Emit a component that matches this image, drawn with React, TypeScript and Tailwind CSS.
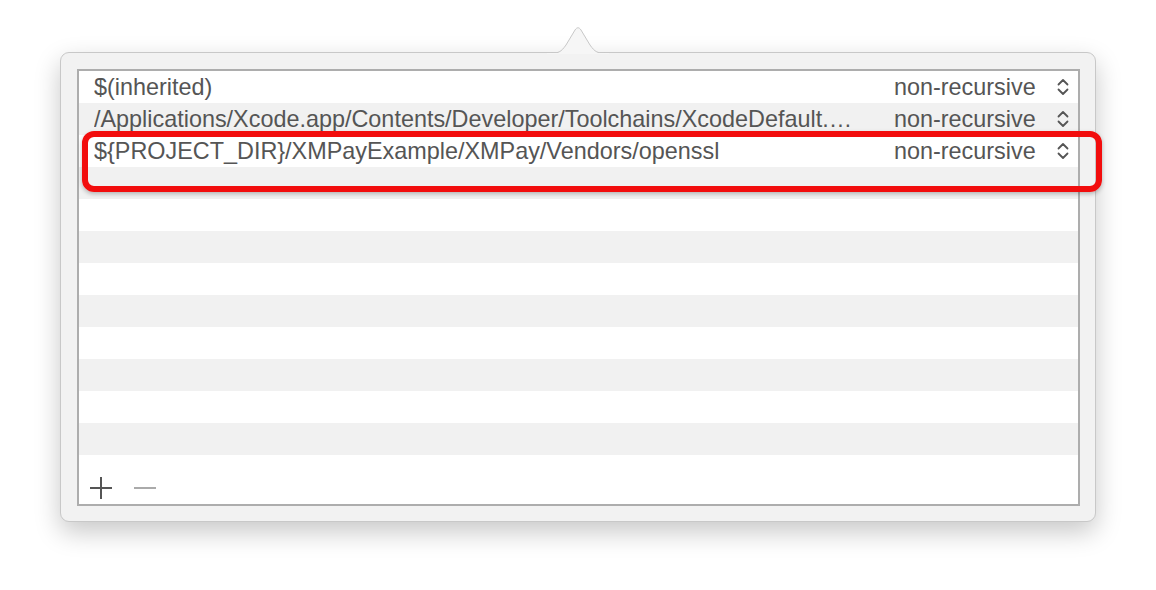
import React from 'react';

interface PathRow {
  path: string;
  mode: string;
}

// paths as displayed in the list (the long one is already truncated by the list)
const rows: PathRow[] = [
  { path: '$(inherited)', mode: 'non-recursive' },
  {
    path: '/Applications/Xcode.app/Contents/Developer/Toolchains/XcodeDefault.…',
    mode: 'non-recursive',
  },
  { path: '${PROJECT_DIR}/XMPayExample/XMPay/Vendors/openssl', mode: 'non-recursive' },
];

const Stepper: React.FC = () => (
  <svg width="14" height="20" viewBox="0 0 14 20" className="shrink-0">
    <path d="M2.5 7.5 L7 3 L11.5 7.5" fill="none" stroke="#555" strokeWidth="1.8" strokeLinecap="round" strokeLinejoin="round" />
    <path d="M2.5 12.5 L7 17 L11.5 12.5" fill="none" stroke="#555" strokeWidth="1.8" strokeLinecap="round" strokeLinejoin="round" />
  </svg>
);

const App: React.FC = () => {
  const total = 12;
  return (
    <div
      className="w-[1156px] h-[590px] bg-white pt-[52px] pl-[60px] overflow-hidden"
      style={{ fontFamily: '"Liberation Sans", Arial, sans-serif' }}
    >
      <div className="relative w-[1036px] h-[470px] rounded-[9px] bg-[#f2f2f2] border border-[#c8c8c8] shadow-[0_10px_26px_rgba(0,0,0,0.22)] pt-[16px] pl-[16px]">
        {/* popover arrow */}
        <svg
          className="absolute left-[486px] top-[-27px]"
          width="62"
          height="28"
          viewBox="0 0 62 28"
        >
          <path
            d="M0 27.5 C12 27.5 14 26 19 19 L28 4 C30 1 32 1 34 4 L43 19 C48 26 50 27.5 62 27.5"
            fill="#f6f6f6"
            stroke="#c8c8c8"
            strokeWidth="1"
          />
          <rect x="0" y="27" width="62" height="2" fill="#f6f6f6" />
        </svg>

        <div className="w-[1003px] h-[437px] border-2 border-[#adadad] bg-white flex flex-col text-[23.4px] text-[#555555]">
          {Array.from({ length: total }).map((_, i) => {
            const r = rows[i];
            return (
              <div
                key={i}
                className={`h-[32px] shrink-0 flex items-center pl-[15px] pr-[8px] ${i % 2 === 1 ? 'bg-[#f1f1f1]' : 'bg-white'}`}
              >
                {r && (
                  <>
                    <div className="w-[792px] whitespace-nowrap overflow-hidden leading-[32px]">{r.path}</div>
                    <div className="ml-[8px] w-[162px] whitespace-nowrap leading-[32px]">{r.mode}</div>
                    <Stepper />
                  </>
                )}
              </div>
            );
          })}
          <div className="flex-1 flex items-end pb-[4px] pl-[10px] gap-[20px]">
            <svg width="24" height="24" viewBox="0 0 24 24">
              <path d="M12 1 V23 M1 12 H23" stroke="#555" strokeWidth="2" />
            </svg>
            <svg width="24" height="24" viewBox="0 0 24 24">
              <path d="M1 12 H23" stroke="#aaa" strokeWidth="2" />
            </svg>
          </div>
        </div>

        {/* red highlight annotation */}
        <div className="absolute left-[21px] top-[78px] w-[1020px] h-[61px] rounded-[12px] border-[6px] border-[#f20d0d] shadow-[0_2px_4px_rgba(0,0,0,0.25)]" />
      </div>
    </div>
  );
};

export default App;
